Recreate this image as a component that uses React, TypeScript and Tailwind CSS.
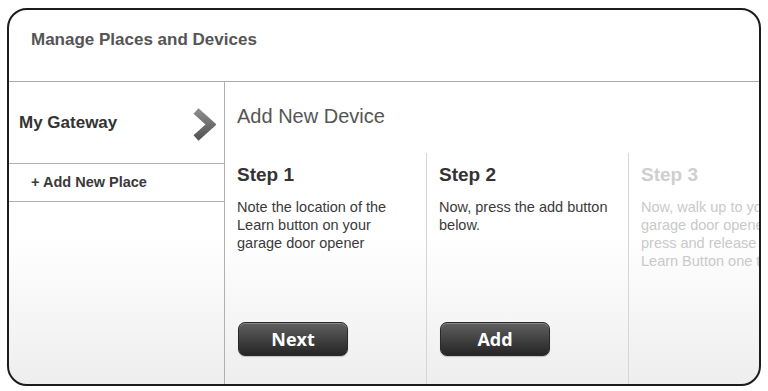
import React from "react";

const steps = [
  {
    title: "Step 1",
    lines: ["Note the location of the", "Learn button on your", "garage door opener"],
    button: "Next",
    muted: false,
  },
  {
    title: "Step 2",
    lines: ["Now, press the add button", "below."],
    button: "Add",
    muted: false,
  },
  {
    title: "Step 3",
    lines: ["Now, walk up to your", "garage door opener,", "press and release the", "Learn Button one time."],
    button: null,
    muted: true,
  },
];

function Chevron() {
  return (
    <svg width="23" height="33" viewBox="0 0 23 33">
      <defs>
        <linearGradient id="chev" x1="0" y1="0" x2="0" y2="1">
          <stop offset="0" stopColor="#8a8a8a" />
          <stop offset="1" stopColor="#555555" />
        </linearGradient>
      </defs>
      <polyline points="3,3 18,16.5 3,30" fill="none" stroke="url(#chev)" strokeWidth="7.5" strokeLinejoin="miter" />
    </svg>
  );
}

export default function App() {
  return (
    <div className="w-[768px] h-[391px] bg-white pl-[7px] pt-[8px] font-['Liberation_Sans',Arial,sans-serif]">
      <div className="w-[754px] h-[378px] border-2 border-[#1c1c1c] rounded-[20px] overflow-hidden flex flex-col bg-linear-to-b from-white via-white via-60% to-[#eeeeee]">
        {/* Header */}
        <div className="h-[72px] shrink-0 pt-[20px] pl-[22px] border-b border-[#a9a9a9]">
          <h1 className="text-[17px] leading-[20px] font-bold text-[#555]">Manage Places and Devices</h1>
        </div>

        <div className="flex flex-1 min-h-0">
          {/* Sidebar */}
          <aside className="w-[216px] shrink-0 border-r border-[#b0b0b0]">
            <div className="h-[82px] flex items-center justify-between pl-[10px] pr-[8px] border-b border-[#b0b0b0]">
              <span className="text-[17px] font-bold text-[#333]">My Gateway</span>
              <span className="mt-[4px]"><Chevron /></span>
            </div>
            <div className="h-[38px] flex items-center pl-[22px] border-b border-[#b0b0b0]">
              <span className="text-[14.5px] font-bold text-[#3a3a3a]">+ Add New Place</span>
            </div>
          </aside>

          {/* Main */}
          <main className="flex-1 flex flex-col min-w-0">
            <div className="h-[71px] shrink-0 pt-[22px] pl-[12px]">
              <h2 className="text-[20px] leading-[24px] text-[#555]">Add New Device</h2>
            </div>
            <div className="flex flex-1 min-h-0">
              {steps.map((s, i) => (
                <section
                  key={s.title}
                  className={`shrink-0 flex flex-col pt-[11px] pl-[12px] pb-[28px] ${
                    i > 0 ? "w-[202px] border-l border-[#d6d6d6]" : "w-[201px]"
                  }`}
                >
                  <h3 className={`text-[19px] leading-[22px] font-bold ${s.muted ? "text-[#cfcfcf]" : "text-[#333]"}`}>
                    {s.title}
                  </h3>
                  <p className={`mt-[12px] text-[14.5px] leading-[18px] whitespace-nowrap ${s.muted ? "text-[#c9c9c9]" : "text-[#3a3a3a]"}`}>
                    {s.lines.map((l) => (
                      <span key={l} className="block">{l}</span>
                    ))}
                  </p>
                  {s.button && (
                    <button className="mt-auto ml-[1px] w-[110px] h-[34px] rounded-[7px] border border-[#2a2a2a] bg-linear-to-b from-[#606060] to-[#262626] shadow-[inset_0_1px_0_rgba(255,255,255,0.25),0_1px_1px_rgba(0,0,0,0.2)] text-white text-[18px] font-bold font-['Open_Sans',Arial,sans-serif]">
                      {s.button}
                    </button>
                  )}
                </section>
              ))}
            </div>
          </main>
        </div>
      </div>
    </div>
  );
}
